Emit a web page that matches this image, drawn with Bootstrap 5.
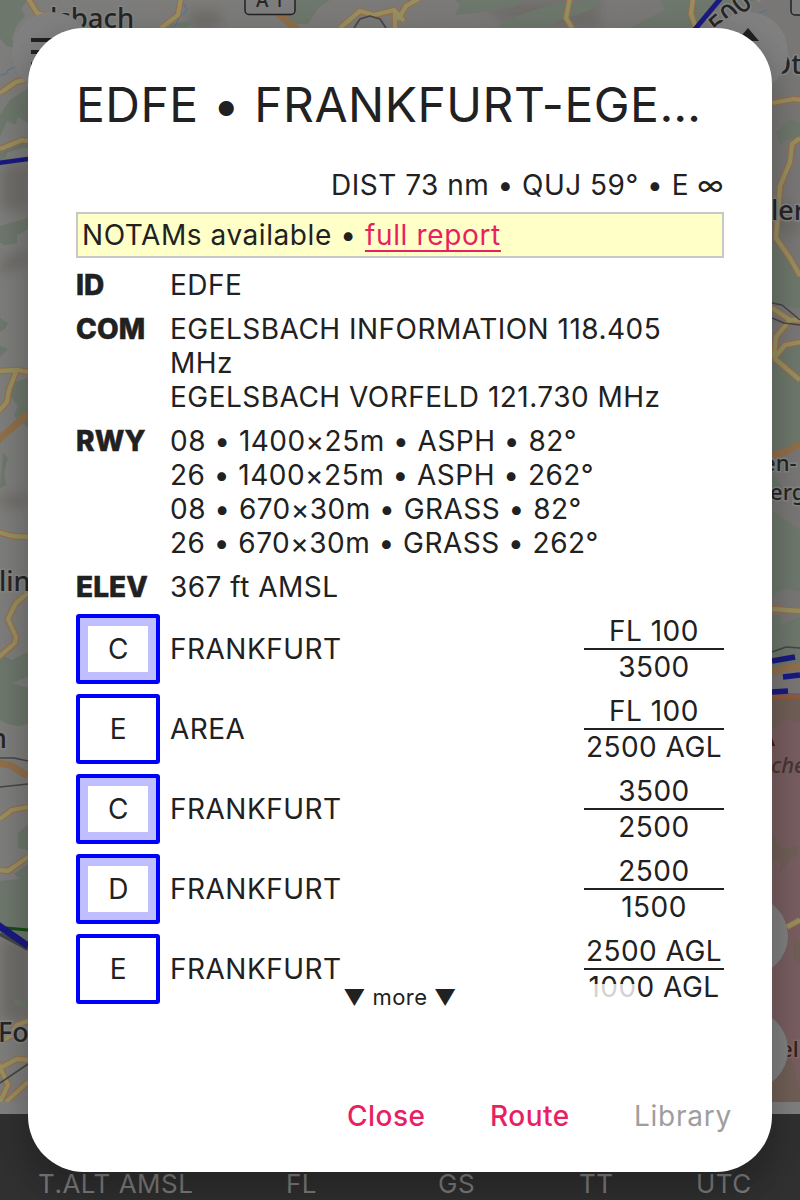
<!DOCTYPE html>
<html lang="en">
<head>
<meta charset="utf-8">
<meta name="viewport" content="width=device-width, initial-scale=1">
<title>EDFE</title>
<link href="https://cdn.jsdelivr.net/npm/bootstrap@5.3.0/dist/css/bootstrap.min.css" rel="stylesheet">
<style>
body{font-family:Inter,sans-serif;font-size:28px;line-height:34px;letter-spacing:.48px;color:#212121;background:#303030;overflow:hidden}
.stage{width:800px;height:1200px}
.map{width:800px;height:1102px}
.map text{font-family:"Noto Sans",sans-serif;font-weight:500;letter-spacing:0;fill:#262626;stroke:#858585;stroke-width:3px;paint-order:stroke}
.strip{height:12px;background:#7f7f7f}
.status{height:86px;color:#7c7c7c;background:#303030;font-size:26px;letter-spacing:.5px}
.status span{position:absolute;top:1167px}
.sheet{left:28px;top:28px;width:744px;height:1144px;border-radius:56px;background:#fff;box-shadow:0 22px 30px 4px rgba(0,0,0,.14),0 8px 30px 6px rgba(0,0,0,.1);padding:48px 48px 0}
.sheet h1{font-size:48px;line-height:58px;font-weight:400;letter-spacing:.5px;margin:0 0 34px}
.scroller{height:838px;overflow:hidden}
.notam{border:2px solid #c8c8c8;background:#ffffc8;padding:4px;height:46px;margin:10px 0;letter-spacing:.56px}
.notam a{color:#e91e63;letter-spacing:.65px;text-decoration:underline;text-decoration-thickness:2px;text-underline-offset:5px;text-decoration-skip-ink:none}
.key{width:94px;flex:none;font-weight:800;letter-spacing:.1px;-webkit-text-stroke:.5px #212121}
.info{margin-bottom:10px}
.space{height:70px;margin-bottom:10px}
.cls{width:84px;height:70px;border:4px solid #00f;border-radius:3px;margin-right:10px;padding-left:1px}
.cls.ring{box-shadow:inset 0 0 0 8px #bfbfff}
.limits{width:140px;line-height:34px}
.limits div:first-child{border-bottom:2px solid #212121;height:36px}
.more{left:135px;top:956px;width:474px;height:28px;font-size:22px;line-height:27px;background:rgba(255,255,255,.8);letter-spacing:.4px}
.acts{left:0;right:0;top:1071px;font-weight:500}
.acts span{position:absolute;color:#e91e63}
.acts .off{left:606px;color:#9e9e9e;letter-spacing:.75px}
</style>
</head>
<body>
<div class="stage position-relative overflow-hidden">
<svg class="map d-block" viewBox="0 0 800 1102">
<defs><linearGradient id="g" x1="0" y1="0" x2="1" y2="0"><stop offset="0" stop-color="#7d7d7b"/><stop offset="1" stop-color="#787776"/></linearGradient>
<filter id="soft"><feGaussianBlur stdDeviation="6"/></filter></defs>
<rect width="800" height="1102" fill="url(#g)"/>
<g filter="url(#soft)" fill="#6f6d6b"><path d="M0 165h28v45h-28zM0 260l28-10v15L0 275zM0 940h28v80h-28zM190 10h30v18h-30zM480 8l30-8h90v28h-80zM772 205h28v30h-28zM0 495h28v12H0z"/></g>
<g fill="#6d776b">
<path d="M0 0h27l-6 9 4 7-8 9-5 12 2 11-8-2L0 38zM28 88v35l-10-6-3 8-8-4-7 15v14l13-7 15-4v8L8 152l-8 15v-52l10-15zM0 226l28-8v11l-11 6v8l-12 2-5-2zM0 318l8 5-3 6-5 3zM0 346l8 3-8 8zM10 384l18-6v50l-14-12 4-10-8-10zM3 453l5 5-4 15 2 12-6 3z"/>
<path d="M0 654l12 6 16-8v25l-16 6 16 5v36l-10 2-10-2-8-4zM28 825l-10 8v15l10 2v90L0 936v-55l20-2-6-5 14-10zM14 1000h14v8l-12-3z"/>
<path d="M455 0h70l-10 7-30 5-30 3 5-10zM505 20l50-17 45-3v7l-45 15-7 5h-50zM660 0h95l-20 10-15-4-30 22h-60l35-18zM270 0h60l-12 8-10 16h-20l-12-15zM160 25l40-5-15 8z"/>
<path d="M776 132l14-13 10 3v16l-12 1-8 6zM772 235l10 18 18 20v36l-28-6zM780 345l20-5v105l-28 6v-93zM772 510l28 20v62l-14-4-14 8zM772 615h9v30l-9 5zM781 625l19-8v50h-28v-15zM772 470l12 20-12 15z"/>
</g>
<path d="M772 693h28v409h-28z" fill="#785e60"/>
<g fill="#705f56"><path d="M772 698h28v25l-14-4-14 10zM772 835l10 14 16-3v10l-26 6zM782 860l14-8-18 23zM795 940h5v25l-7-6zM772 1030l14 20 14-4v8h-10l10 35v13h-28z"/></g>
<g fill="none" stroke="#55728f" stroke-width="1"><path d="M0 75l6-1 2-4 7-3M182 0l5 10-8 8-4 9-8 1M747 28l5-12 15-6"/></g>
<g fill="none" stroke-linejoin="round">
<g stroke="#9a6b4c" stroke-width="6.500">
<path d="M28 -2l9 15 10 3 5 4M181 -2l-3 17-17 13M0 93l16-11 12-3M0 149l22-9 6 1M0 371l18-1 10 2M16 372l-7 18-2 12-9 10M-2 532l14 4 16 1M28 593l-12 10-8 16 8 18-1 6-16 14M0 819l12-9 16-3M0 870l8 1 20-14M0 1068l17-9 11 1M-2 1063l10 22-8 17M6 1102l22-20M10 1035l7-10 11-4M0 1042l12-7"/>
<path d="M420 -2l-14 8-8 14M340 28l20-17 14 4 20-5 10 11M395 10v18M570 -2l-4 20 6 10M693 -2l-2 16 5 14M772 103l22-4 6 1M800 138l-8 6-2 18-10 24-4 52 14 20 10 18M772 308l18 12h10M774 358l2-21 14-17M774 358l11-13 15-3M774 358l26 22M772 609l28 2M787 927l13-7"/>
</g>
<g stroke="#968f60" stroke-width="4.300">
<path d="M28 -2l9 15 10 3 5 4M181 -2l-3 17-17 13M0 93l16-11 12-3M0 149l22-9 6 1M0 371l18-1 10 2M16 372l-7 18-2 12-9 10M-2 532l14 4 16 1M28 593l-12 10-8 16 8 18-1 6-16 14M0 819l12-9 16-3M0 870l8 1 20-14M0 1068l17-9 11 1M-2 1063l10 22-8 17M6 1102l22-20M10 1035l7-10 11-4M0 1042l12-7"/>
<path d="M420 -2l-14 8-8 14M340 28l20-17 14 4 20-5 10 11M395 10v18M570 -2l-4 20 6 10M693 -2l-2 16 5 14M772 103l22-4 6 1M800 138l-8 6-2 18-10 24-4 52 14 20 10 18M772 308l18 12h10M774 358l2-21 14-17M774 358l11-13 15-3M774 358l26 22M772 609l28 2M787 927l13-7"/>
</g>
<g stroke="#8f6f4a" stroke-width="7"><path d="M-2 440l30-26M276 12l22 18M-2 763l12 2 18 11M772 455l13-3 15-8M772 672l18-5h10"/><path d="M772 697h28" stroke="#905a3a" stroke-width="4"/></g>
<g stroke="#464646" stroke-width="1.600"><path d="M0 758h14l14 3M0 787l28-3M0 1083l28-19M772 303l10 2 18 15M772 318l12 5 16 2M772 652l14-5 14 1M354 28l6-9 10-3 10 3 6 9"/><path d="M0 934l28 15" stroke-width="4"/></g>
<path d="M6 928l22 2" stroke="#164d16" stroke-width="3"/>
<g stroke="#1a1a80"><path d="M-2 163l30-4" stroke-width="4.500"/><path d="M-2 925l30 21" stroke-width="7"/><path d="M721 -2l-30 36" stroke-width="5"/><path d="M772 661l23-4M783 677l17-2M772 692l16-1" stroke-width="5.500"/></g>
</g>
<path d="M772 738l3 8h-3z" fill="#4b1717"/>
<text x="50" y="28" font-size="27.500">lsbach</text>
<text x="770" y="74" font-size="27">Ot</text><text x="771" y="220" font-size="27">ler</text>
<text x="763" y="471" font-size="22">en-</text><text x="770" y="500" font-size="22">erg</text>
<text x="-1" y="591" font-size="27">lin</text><text x="-10" y="748" font-size="27">n</text><text x="-2" y="1042" font-size="27">Fo</text>
<text x="771" y="773" font-size="22" font-style="italic" style="fill:#4a3434;stroke:#775f5f">che</text><text x="780" y="1057" font-size="22" style="fill:#351e20;stroke:#7f6868">elb</text>
<text transform="translate(719 36) rotate(-42)" font-size="27">500 A</text>
<g fill="#7d7d7d" stroke="#222" stroke-width="1.500"><rect x="245" y="-16" width="50" height="30.500" rx="4"/><rect x="791" y="-16" width="40" height="31" rx="4"/></g>
<text x="256" y="7" font-size="19" style="stroke:none">A 1</text>
<g fill="#808080"><circle cx="52" cy="52" r="40"/><circle cx="748" cy="52" r="40"/><circle cx="748" cy="936" r="40"/><circle cx="748" cy="1050" r="40"/></g>
<path d="M31 38h42v4H31zM31 50h42v4H31zM31 62h42v4H31zM748 28l-11 13h22z" fill="#222"/>
</svg>
<div class="strip"></div>
<div class="status"><span style="left:38px">T.ALT AMSL</span><span style="left:286px">FL</span><span style="left:438px">GS</span><span style="left:579px">TT</span><span style="left:696px">UTC</span></div>
<main class="sheet position-absolute">
<h1 class="text-truncate">EDFE • FRANKFURT-EGELSBACH</h1>
<div class="scroller">
<div class="text-end">DIST 73 nm • QUJ 59° • E ∞</div>
<div class="notam">NOTAMs available • <a href="#">full report</a></div>
<div class="info d-flex"><div class="key">ID</div><div>EDFE</div></div>
<div class="info d-flex"><div class="key">COM</div><div>EGELSBACH INFORMATION 118.405 MHz<br>EGELSBACH VORFELD 121.730 MHz</div></div>
<div class="info d-flex"><div class="key">RWY</div><div>08 • 1400×25m • ASPH • 82°<br>26 • 1400×25m • ASPH • 262°<br>08 • 670×30m • GRASS • 82°<br>26 • 670×30m • GRASS • 262°</div></div>
<div class="info d-flex"><div class="key">ELEV</div><div>367 ft AMSL</div></div>
<div class="space d-flex align-items-center"><div class="cls ring d-flex align-items-center justify-content-center">C</div><div class="flex-grow-1">FRANKFURT</div><div class="limits text-center text-nowrap"><div>FL 100</div><div>3500</div></div></div>
<div class="space d-flex align-items-center"><div class="cls d-flex align-items-center justify-content-center">E</div><div class="flex-grow-1">AREA</div><div class="limits text-center text-nowrap"><div>FL 100</div><div>2500 AGL</div></div></div>
<div class="space d-flex align-items-center"><div class="cls ring d-flex align-items-center justify-content-center">C</div><div class="flex-grow-1">FRANKFURT</div><div class="limits text-center text-nowrap"><div>3500</div><div>2500</div></div></div>
<div class="space d-flex align-items-center"><div class="cls ring d-flex align-items-center justify-content-center">D</div><div class="flex-grow-1">FRANKFURT</div><div class="limits text-center text-nowrap"><div>2500</div><div>1500</div></div></div>
<div class="space d-flex align-items-center"><div class="cls d-flex align-items-center justify-content-center">E</div><div class="flex-grow-1">FRANKFURT</div><div class="limits text-center text-nowrap"><div>2500 AGL</div><div>1000 AGL</div></div></div>
</div>
<div class="more position-absolute text-center text-nowrap">▼ more ▼</div>
<div class="acts position-absolute"><span style="left:319px">Close</span><span style="left:462px">Route</span><span class="off fw-normal">Library</span></div>
</main>
</div>
<script src="https://cdn.jsdelivr.net/npm/bootstrap@5.3.0/dist/js/bootstrap.bundle.min.js"></script>
</body>
</html>
